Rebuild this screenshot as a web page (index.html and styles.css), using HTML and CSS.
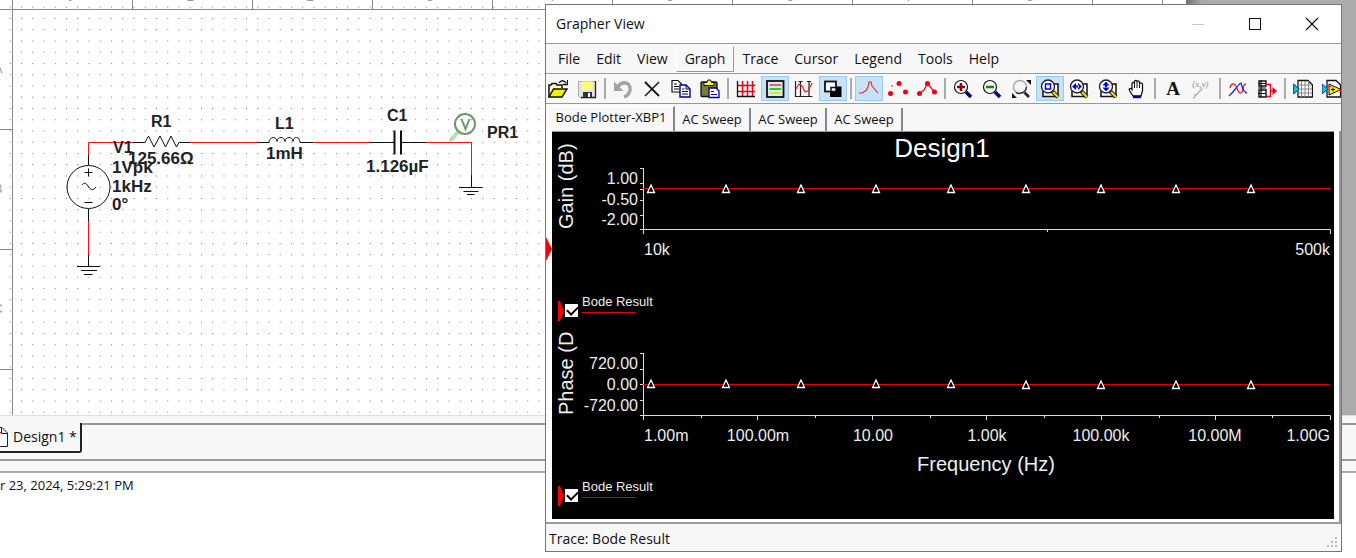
FILE: index.html
```
<!DOCTYPE html>
<html lang="en">
<head>
<meta charset="utf-8">
<title>Design1 - Grapher View</title>
<link rel="stylesheet" href="styles.css">
</head>
<body>
<main class="workspace">
  <div class="canvas">
    <svg class="schematic" role="img" aria-label="Series RLC schematic">
      <defs>
        <pattern id="dots" x="9.7" y="6.7" width="11.25" height="11.25" patternUnits="userSpaceOnUse">
          <rect width="1.1" height="1.1" fill="#888"/>
        </pattern>
      </defs>
      <rect class="sheet-dots" x="9" y="6" width="1150" height="100%" fill="url(#dots)"/>
      <g class="frame">
        <path d="M12.5 0V2000M0 9.5H1163M0 129.5H12M0 249.5H12M0 369.5H12M132.5 0V9M252.5 0V9M372.5 0V9M492.5 0V9M612.5 0V9M732.5 0V9M852.5 0V9M972.5 0V9M1092.5 0V9M1162.5 0V2000"/>
      </g>
      <g class="ruler">
        <text x="70" y="1">0</text><text x="190" y="1">1</text><text x="310" y="1">2</text>
        <text x="430" y="1">3</text><text x="551" y="1">4</text><text x="670" y="1">5</text>
        <text x="790" y="1">6</text><text x="909" y="1">7</text><text x="1030" y="1">8</text>
        <text x="-2" y="73">A</text><text x="-2" y="193">B</text><text x="-2" y="313">C</text>
      </g>
      <path class="wire" d="M88.5 155V142.5H133M190 142.5H257M313 142.5H369M426 142.5H471.500V175M88.500 221V255"/>
      <g class="part">
        <path d="M133 142.500H145L148.500 136L154 147L160 136L165.500 147L171 136L176.500 147L179 142.500H190"/>
        <path d="M257 142.500H269C269 140 271 137.500 273.500 137.500S277 140 277 141.500C277 139 279 137.500 281 137.500S285 139 285 141.500C285 139 287 137.500 289 137.500S293 139 293 141.500C293 139 294.500 137.500 296.500 137.500S300 140 300 142.500H313"/>
        <path d="M369 142.500H394M401 142.500H426"/>
        <path class="thick" d="M394.500 130.500V154.500M401 130.500V154.500"/>
        <path d="M471.500 175V187M459 187.500H482.500M463.500 191.500H478.500M467 194.500H474.500"/>
        <circle cx="88.500" cy="187" r="21.500"/>
        <path d="M88.500 155V165M84.500 172.500H92.500M88.500 168.500V176.500M84.500 202.500H92.500M82 185C84 182.500 86 182.500 88 186S93 191.500 96 187"/>
        <path d="M88.500 209V221M88.500 255V266M77 266.500H100M81 270.500H97M84 274.500H92.500"/>
      </g>
      <path class="probe-tip" d="M450 141L458 132"/>
      <g class="probe">
        <circle cx="465" cy="124" r="10"/>
        <path d="M461.500 119L465.500 129L469.500 119"/>
      </g>
      <g class="ref">
        <text x="151" y="127">R1</text><text x="275" y="129">L1</text>
        <text x="387" y="121">C1</text><text x="487" y="138">PR1</text><text x="113" y="153">V1</text>
      </g>
      <g class="value">
        <text x="128" y="164">125.66Ω</text><text x="266" y="159">1mH</text>
        <text x="366" y="172">1.126µF</text><text x="112" y="173">1Vpk</text>
        <text x="112" y="192">1kHz</text><text x="112" y="210">0°</text>
      </g>
    </svg>
    <div class="desk"></div>
  </div>
  <nav class="sheets" aria-label="Design sheets">
    <button class="sheet-tab" type="button">
      <svg class="doc" viewBox="0 0 8 20"><path d="M0 .5H2L7.500 6V19.500H0" fill="#fff" stroke="#222"/><path d="M1.500 .5V6.500H7.500" fill="none" stroke="#222"/><path d="M0 5.500H1.500" stroke="#e00"/></svg>
      Design1 *
    </button>
  </nav>
  <section class="output"><span class="stamp">r 23, 2024, 5:29:21 PM</span></section>
</main>

<section class="window" aria-label="Grapher View">
  <header class="title-bar">
    <h1 class="title">Grapher View</h1>
    <button class="ctl" type="button" aria-label="Minimize"><svg class="glyph" viewBox="0 0 14 14"><path d="M1 7.500H13" stroke="#c8c8c8"/></svg></button>
    <button class="ctl" type="button" aria-label="Maximize"><svg class="glyph" viewBox="0 0 14 14"><rect x="1.500" y="1.500" width="11" height="11" fill="none" stroke="#111"/></svg></button>
    <button class="ctl" type="button" aria-label="Close"><svg class="glyph" viewBox="0 0 14 14"><path d="M1 1L13 13M13 1L1 13" stroke="#111" stroke-width="1.200"/></svg></button>
  </header>
  <nav class="menu">
    <button type="button">File</button><button type="button">Edit</button><button type="button">View</button><button type="button" class="raised">Graph</button><button type="button">Trace</button><button type="button">Cursor</button><button type="button">Legend</button><button type="button">Tools</button><button type="button">Help</button>
  </nav>
  <div class="toolbar" role="toolbar" aria-label="Grapher tools">
    <button type="button" aria-label="Open"><svg viewBox="0 0 20 20"><path d="M1 18V6H3L4 4.500H8L9 6H14V9" fill="#ffffb0" stroke="#111" stroke-width="1.500"/><path d="M1 18L5.500 10H19L14 18Z" fill="#f4f000" stroke="#111" stroke-width="1.500"/><path d="M11 4C13 1 16 1 18 4M19.500 1V5.500H15" fill="none" stroke="#111" stroke-width="1.300"/></svg></button>
    <button type="button" aria-label="Save"><svg viewBox="0 0 20 20"><path d="M1.500 2.500H18.500V18.500H3L1.500 17Z" fill="#e4e4e4" stroke="#aaa"/><path d="M18.500 2V18.500H4" fill="none" stroke="#222" stroke-width="1.300"/><rect x="5" y="2.500" width="10.500" height="8.500" fill="#ffff70"/><path d="M6 13H15V18H6Z" fill="#333"/><rect x="11" y="14" width="2" height="4" fill="#fff"/></svg></button>
    <i class="sep"></i>
    <button type="button" aria-label="Undo"><svg viewBox="0 0 20 20"><path d="M4 9C9 1 18 3 17 11C16.500 14 14 17 11 18" fill="none" stroke="#a4a4a4" stroke-width="3.500"/><path d="M1 2.500V12H10.500Z" fill="#a4a4a4"/></svg></button>
    <button type="button" aria-label="Delete"><svg viewBox="0 0 20 20"><path d="M3 3L17 17" stroke="#111" stroke-width="1.800"/><path d="M17 3L3 17" stroke="#111" stroke-width="1.500"/></svg></button>
    <button type="button" aria-label="Copy"><svg viewBox="0 0 20 20"><path d="M1 1.500H7L10.500 5V13H1Z" fill="#fff" stroke="#111" stroke-width="1.200"/><path d="M3 5H6M3 7.500H8M3 10H8" stroke="#111"/><path d="M9 6H15L19 10V18H9Z" fill="#fff" stroke="#00008b" stroke-width="1.400"/><path d="M15 6V10H19M11 10H13.500M11 12.500H17M11 15H17" fill="none" stroke="#00008b"/></svg></button>
    <button type="button" aria-label="Paste"><svg viewBox="0 0 20 20"><rect x="1" y="3" width="16" height="14.500" rx="1" fill="#7a7a45" stroke="#111" stroke-width="1.300"/><path d="M4 6.500V3.500H7L8 1H10.500L11.500 3.500H14V6.500Z" fill="#ffff40" stroke="#111"/><path d="M9 9H16L19 12V18.500H9Z" fill="#fff" stroke="#00008b" stroke-width="1.300"/><path d="M11 12.500H14M11 15.500H17" stroke="#00008b"/></svg></button>
    <i class="sep"></i>
    <button type="button" aria-label="Grid"><svg viewBox="0 0 20 20"><path d="M6.500 2V17M11.500 2V17M16.500 2V17M2 6.500H19M2 12.500H19" stroke="#f00010" stroke-width="1.500"/><path d="M1.500 2V17.500H19" fill="none" stroke="#111" stroke-width="1.300"/></svg></button>
    <button type="button" class="on" aria-label="Legend"><svg viewBox="0 0 20 20"><rect x="2" y="2" width="16.500" height="16" fill="#d6ecff" stroke="#111" stroke-width="1.800"/><path d="M4.500 6H16" stroke="#f03030" stroke-width="1.500"/><path d="M4.500 10H16" stroke="#00d800" stroke-width="1.800"/><path d="M4.500 14H16" stroke="#e6e600" stroke-width="1.800"/></svg></button>
    <button type="button" aria-label="Cursors"><svg viewBox="0 0 20 20"><path d="M1.500 2V17.500H18.500M6.500 3V17M15 3V17M4.500 2.500H8.500M13 2.500H17" fill="none" stroke="#222" stroke-width="1.200"/><path d="M2 10L5 5L8 7L11 13L14 12L18 4" fill="none" stroke="#f02020" stroke-width="1.200"/></svg></button>
    <button type="button" class="on" aria-label="Black and white"><svg viewBox="0 0 20 20"><rect x="7" y="7.500" width="11.500" height="10.500" fill="#000"/><rect x="2" y="2.500" width="11" height="10" fill="#fff" stroke="#111" stroke-width="1.800"/><rect x="8" y="8.500" width="5" height="4" fill="#fff" stroke="#111" stroke-width="1.500"/></svg></button>
    <i class="sep"></i>
    <button type="button" class="on" aria-label="Line"><svg viewBox="0 0 20 20"><path d="M0 14H3L7 11.500L9 8L10 3H12L13 7L19 14" fill="none" stroke="#f02020" stroke-width="1.100"/></svg></button>
    <button type="button" aria-label="Points"><svg viewBox="0 0 20 20"><g fill="#f00010"><circle cx="2.500" cy="14.500" r="2.500"/><circle cx="11" cy="4.500" r="2.500"/><circle cx="17.500" cy="13" r="2.500"/><circle cx="4" cy="7" r=".8"/></g></svg></button>
    <button type="button" aria-label="Line and points"><svg viewBox="0 0 20 20"><path d="M2.500 14.500L7 11L10.500 4.500L17.500 13" fill="none" stroke="#f00010" stroke-width="1.200"/><g fill="#f00010"><circle cx="2.500" cy="14.500" r="2.500"/><circle cx="10.500" cy="4.500" r="2.500"/><circle cx="17.500" cy="13" r="2.500"/></g></svg></button>
    <i class="sep"></i>
    <button type="button" aria-label="Zoom in"><svg viewBox="0 0 20 20"><path d="M13 13L18 18" stroke="#00008b" stroke-width="3.500"/><circle cx="8" cy="8" r="6.500" fill="#fff" stroke="#111" stroke-width="1.200"/><path d="M8 4V12M4 8H12" stroke="#900010" stroke-width="2.600"/></svg></button>
    <button type="button" aria-label="Zoom out"><svg viewBox="0 0 20 20"><path d="M13 13L18 18" stroke="#00008b" stroke-width="3.500"/><circle cx="8" cy="8" r="6.500" fill="#fff" stroke="#111" stroke-width="1.200"/><path d="M4 8H12" stroke="#008a10" stroke-width="2.600"/></svg></button>
    <button type="button" aria-label="Zoom to fit"><svg viewBox="0 0 20 20"><path d="M13 13L18 18" stroke="#222" stroke-width="2.600"/><circle cx="9" cy="8" r="6.500" fill="#f4f4f4" stroke="#aaa" stroke-width="1.500"/><path d="M5 13.500C9 16 15 13 15.500 8" fill="none" stroke="#222" stroke-width="1.200"/><path d="M15 1H20V6ZM1 14V19H6Z" fill="#111"/></svg></button>
    <button type="button" class="on" aria-label="Zoom region"><svg viewBox="0 0 20 20"><path d="M3 12V17.500H18V5H14" fill="#fff" stroke="#111" stroke-width="1.500"/><path d="M12 12L18 18" stroke="#222" stroke-width="4"/><path d="M13 13L18 18" stroke="#f0e020" stroke-width="2"/><circle cx="8" cy="7.500" r="6.500" fill="#fff" stroke="#222" stroke-width="1.400"/><rect x="5.500" y="5" width="5" height="5" fill="#fff" stroke="#0000f0" stroke-width="1.500"/></svg></button>
    <button type="button" aria-label="Zoom horizontal"><svg viewBox="0 0 20 20"><path d="M3 12V17.500H18V5H14" fill="#fff" stroke="#111" stroke-width="1.500"/><path d="M12 12L18 18" stroke="#222" stroke-width="4"/><path d="M13 13L18 18" stroke="#f0e020" stroke-width="2"/><circle cx="8" cy="7.500" r="6.500" fill="#fff" stroke="#222" stroke-width="1.400"/><path d="M3 7.500L7 4V11ZM13 7.500L9 4V11ZM6 6.500H10V8.500H6Z" fill="#0000f0"/></svg></button>
    <button type="button" aria-label="Zoom vertical"><svg viewBox="0 0 20 20"><path d="M3 12V17.500H18V5H14" fill="#fff" stroke="#111" stroke-width="1.500"/><path d="M12 12L18 18" stroke="#222" stroke-width="4"/><path d="M13 13L18 18" stroke="#f0e020" stroke-width="2"/><circle cx="8" cy="7.500" r="6.500" fill="#fff" stroke="#222" stroke-width="1.400"/><path d="M8 2.500L11.500 6.500H4.500ZM8 12.500L11.500 8.500H4.500ZM7 6H9V9H7Z" fill="#0000f0"/></svg></button>
    <button type="button" aria-label="Pan"><svg viewBox="0 0 20 20"><path d="M6 17L2.500 11.500C1.500 9.500 3.500 8.500 5 10.500V4.500C5 3 7.500 3 7.500 4.500V2.500C7.500 1 10 1 10 2.500V3C10 1.500 12.500 1.500 12.500 3.500V5C12.500 3.500 15.500 3.500 15.500 5.500V12L14 17Z" fill="#fff" stroke="#111" stroke-width="1.300"/><path d="M7.500 4V9M10 3V9M12.500 5V9" stroke="#111"/><path d="M6 18H14" stroke="#0000a0" stroke-width="2.400"/></svg></button>
    <i class="sep"></i>
    <button type="button" class="letter" aria-label="Add text">A</button>
    <button type="button" class="coords" aria-label="Show coordinates"><svg viewBox="0 0 20 20"><text x="0" y="8" class="xy">(x,y)</text><path d="M3 17L10 10M1 18.500A1.500 1.500 0 1 0 2 15.500" fill="none" stroke="#aaa" stroke-width="1.300"/></svg></button>
    <i class="sep"></i>
    <button type="button" aria-label="Overlay traces"><svg viewBox="0 0 20 20"><path d="M2 9C3 4 6 4 8 7S10 15 13 14S14 5 18 5" fill="none" stroke="#f02020" stroke-width="1.300"/><path d="M1 17C7 12 10 5 13 4C14 8 16 14 19 14" fill="none" stroke="#2020f0" stroke-width="1.300"/></svg></button>
    <button type="button" aria-label="Latest result"><svg viewBox="0 0 20 20"><path d="M2 2H9V7H2ZM2 11H9V18H2Z" fill="#fff" stroke="#111" stroke-width="1.400"/><path d="M1 4.500H9M1 9H9M1 14.500H9M4 1V18" stroke="#111" stroke-width="1.200"/><path d="M9 5.500H13.500V17.500H9M13.500 12H17" fill="none" stroke="#f00010" stroke-width="1.300"/><path d="M15.500 8L20 12L15.500 16Z" fill="#f00010"/></svg></button>
    <i class="sep"></i>
    <button type="button" aria-label="Export to sheet"><svg viewBox="0 0 20 20"><path d="M5 1.500H15L19.500 6V18H5Z" fill="#fff" stroke="#111" stroke-width="1.300"/><path d="M8.500 2V18M12 2V18M15.500 2V18M5 6H19M5 10H19M5 14H19" stroke="#888"/><path d="M0.700 5V15L6 10Z" fill="#00d0f0" stroke="#103080"/></svg></button>
    <button type="button" aria-label="Export to LabVIEW"><svg viewBox="0 0 20 20"><path d="M5 1.500H14L18.500 6V18H5Z" fill="#fff" stroke="#111" stroke-width="1.300"/><path d="M7 5V16L19 10.500Z" fill="#ffee10" stroke="#111"/><path d="M0 5V15L6 10Z" fill="#00d0f0" stroke="#103080"/><path d="M5 7.500H9M15 11.500H20" stroke="#f02020"/><path d="M9 10.500H13M11 8.500V12.500" stroke="#111"/></svg></button>
  </div>
  <div class="tabs">
    <button type="button" class="tab active">Bode Plotter-XBP1</button><button type="button" class="tab">AC Sweep</button><button type="button" class="tab">AC Sweep</button><button type="button" class="tab">AC Sweep</button>
  </div>
  <div class="body">
    <i class="marker"></i>
    <div class="plots">
      <svg class="plot" viewBox="552 132 782 160" role="img" aria-label="Gain plot">
        <defs><path id="tri" d="M0 -7L3.500 .500H-3.500Z" fill="#000" stroke="#fff" stroke-width="1.300"/></defs>
        <text class="heading" x="942" y="157">Design1</text>
        <text class="axis" transform="translate(573 229) rotate(-90)">Gain (dB)</text>
        <g class="num end"><text x="638" y="184">1.00</text><text x="638" y="205">-0.50</text><text x="638" y="225">-2.00</text><text x="1330" y="255">500k</text></g>
        <text class="num" x="644" y="255">10k</text>
        <path class="lines" d="M643.500 168V234M640 168.500H644M640 183.500H644M640 189.500H644M640 200.500H644M640 215.500H644M640 229.500H1330.500V234M1047.500 230V232"/>
        <path class="trace" d="M643 188.500H1330"/>
        <use href="#tri" x="651" y="192"/><use href="#tri" x="726" y="192"/><use href="#tri" x="801" y="192"/><use href="#tri" x="876" y="192"/><use href="#tri" x="951" y="192"/><use href="#tri" x="1026" y="192"/><use href="#tri" x="1101" y="192"/><use href="#tri" x="1176" y="192"/><use href="#tri" x="1251" y="192"/>
      </svg>
      <div class="legend"><i class="arrow"></i><input type="checkbox" id="gain" checked><label for="gain">Bode Result</label></div>
      <svg class="plot" viewBox="552 332 782 145" role="img" aria-label="Phase plot">
        <text class="axis" transform="translate(573 415) rotate(-90)">Phase (D</text>
        <g class="num end"><text x="638" y="369">720.00</text><text x="638" y="390">0.00</text><text x="638" y="411">-720.00</text><text x="1330" y="441">1.00G</text></g>
        <text class="num" x="644" y="441">1.00m</text>
        <g class="num mid"><text x="758" y="441">100.00m</text><text x="873" y="441">10.00</text><text x="987" y="441">1.00k</text><text x="1101" y="441">100.00k</text><text x="1215" y="441">10.00M</text></g>
        <text class="axis mid" x="986" y="471">Frequency (Hz)</text>
        <path class="lines" d="M643.500 353V420M640 353.500H644M640 369.500H644M640 384.500H644M640 400.500H644M640 415.500H1330.500V420M757.500 416V420M872.500 416V420M986.500 416V420M1101.500 416V420M1215.500 416V420M701.500 416V418M815.500 416V418M930.500 416V418M1044.500 416V418M1159.500 416V418M1272.500 416V418"/>
        <path class="trace" d="M643 384.500H1330"/>
        <use href="#tri" x="651" y="387"/><use href="#tri" x="726" y="387"/><use href="#tri" x="801" y="387"/><use href="#tri" x="876" y="387"/><use href="#tri" x="951" y="387"/><use href="#tri" x="1026" y="388"/><use href="#tri" x="1101" y="388"/><use href="#tri" x="1176" y="388"/><use href="#tri" x="1251" y="388"/>
      </svg>
      <div class="legend"><i class="arrow"></i><input type="checkbox" id="phase" checked><label for="phase">Bode Result</label></div>
    </div>
  </div>
  <footer class="status"><span>Trace: Bode Result</span>
    <svg class="grip" viewBox="0 0 12 12"><path d="M8 0H10V2H8ZM4 4H6V6H4ZM8 4H10V6H8ZM0 8H2V10H0ZM4 8H6V10H4ZM8 8H10V10H8Z" fill="#bbb"/></svg>
  </footer>
</section>
</body>
</html>
```

FILE: styles.css
```
* { box-sizing: border-box; }

body {
  margin: 0;
  height: 100vh;
  overflow: hidden;
  position: relative;
  background: #fff;
  color: #111;
  font: 14px/20px "Open Sans", "Noto Sans", sans-serif;
}

button {
  margin: 0;
  padding: 0;
  border: 0;
  background: none;
  color: inherit;
  font: inherit;
  white-space: nowrap;
}

svg { display: block; }

/* Schematic workspace */
.workspace {
  display: flex;
  flex-direction: column;
  height: 100%;
}

.canvas {
  flex: 1;
  display: flex;
  min-height: 0;
}

.schematic {
  flex: 0 1 1186px;
  min-width: 0;
  height: 100%;
  background: #fff;
}

.desk {
  flex: 1;
  background: linear-gradient(to right, #707070, #ababab 16px);
}

.frame { fill: none; stroke: #888; }
.ruler { fill: #999; font: 13px "Liberation Sans", Arial, sans-serif; text-anchor: middle; }
.wire { fill: none; stroke: #ff1010; }
.part { fill: none; stroke: #111; }
.thick { stroke-width: 2; }
.probe-tip { stroke: #b2dfb2; stroke-width: 4; }
.probe { fill: none; stroke: #6b976b; stroke-width: 2; }
.ref { fill: #222; font: bold 16px "Liberation Sans", Arial, sans-serif; }
.value { fill: #222; font: bold 17px "Liberation Sans", Arial, sans-serif; }

.sheets {
  display: flex;
  height: 44px;
  padding-bottom: 7px;
  border-top: 1px solid #ddd;
  background: #f7f7f7;
}

.sheets::after {
  content: "";
  flex: 1;
  margin-top: 7px;
  border-top: 2px solid #999;
}

.sheet-tab {
  display: flex;
  align-items: center;
  gap: 5px;
  height: 30px;
  margin-top: 7px;
  padding-right: 3px;
  border-right: 2px solid #222;
  border-bottom: 2px solid #222;
  border-bottom-right-radius: 3px;
}

.doc { width: 8px; height: 20px; }

.output {
  height: 99px;
  border-top: 2px solid #999;
  background: #fff;
}

.output::before {
  content: "";
  display: block;
  height: 10px;
  border-bottom: 2px solid #aaa;
  background: #f7f7f7;
}

.stamp { display: block; padding-top: 2px; font-size: 13px; }

/* Grapher window, floating over the workspace */
.window {
  position: absolute;
  inset: 4px 14px 6px 545px;
  display: flex;
  flex-direction: column;
  overflow: hidden;
  border: 1px solid #777;
  background: #f7f7f7;
}

.title-bar {
  display: flex;
  align-items: center;
  height: 39px;
  padding: 0 1px 0 10px;
  border-bottom: 1px solid #999;
  background: #fff;
}

.title { flex: 1; margin: 0; font-size: 14px; font-weight: 400; }

.ctl {
  display: grid;
  place-items: center;
  width: 57px;
  height: 38px;
}

.glyph { width: 14px; height: 14px; }

.menu {
  display: flex;
  align-items: center;
  height: 30px;
  padding-left: 4px;
  border-bottom: 1px solid #999;
}

.menu button { height: 26px; padding: 0 8px; }

.menu .raised {
  border: 1px solid #fff;
  border-right-color: #999;
  border-bottom-color: #999;
}

.toolbar {
  display: flex;
  align-items: center;
  gap: 1px;
  height: 30px;
  margin-left: -2px;
  border-bottom: 1px solid #999;
}

.toolbar button {
  display: grid;
  place-items: center;
  flex: none;
  width: 28px;
  height: 25px;
  border: 1px solid transparent;
}

.toolbar svg { width: 20px; height: 20px; }
.toolbar .on { border-color: #99cbee; background: #c7e2f6; }

.sep {
  flex: none;
  width: 2px;
  height: 21px;
  margin: 0 2px;
  background: #aaa;
}

.toolbar .letter { font: bold 19px/20px "Liberation Serif", serif; }
.xy { fill: #aaa; font: italic bold 9px "Liberation Serif", serif; }
.coords svg { overflow: visible; }

.tabs {
  display: flex;
  align-items: flex-end;
  height: 27px;
  padding-left: 2px;
}

.tab {
  height: 23px;
  width: 76px;
  padding-bottom: 2px;
  border-right: 2px solid #888;
  font-size: 13px;
}

.tab.active {
  width: 127px;
  height: 25px;
  padding-bottom: 5px;
  border-top: 1px solid #fff;
  border-left: 1px solid #fff;
}

.body {
  position: relative;
  flex: 1;
  min-height: 0;
  padding: 0 5px 3px 6px;
  border-right: 2px solid #999;
  border-bottom: 2px solid #999;
  background: #fff;
}

.marker {
  position: absolute;
  left: 0;
  top: 106px;
  width: 6px;
  height: 24px;
  background: #f00;
  clip-path: polygon(0 0, 100% 50%, 0 100%);
}

.plots {
  display: flex;
  flex-direction: column;
  height: 100%;
  border-top: 1px solid #999;
  background: #000;
  color: #eee;
}

.plot { width: 100%; overflow: visible; }
.plot text { fill: #eee; font-family: "Liberation Sans", Arial, sans-serif; }
.plot .heading { fill: #fff; font-size: 26px; text-anchor: middle; }
.axis { font-size: 20px; }
.num { font-size: 16px; }
.end { text-anchor: end; }
.mid { text-anchor: middle; }
.lines { fill: none; stroke: #ddd; }
.trace { stroke: #e80000; }

.legend {
  display: flex;
  align-items: flex-start;
  height: 40px;
  padding-left: 6px;
}

.arrow {
  width: 6px;
  height: 20px;
  margin-top: 9px;
  background: #f00;
  clip-path: polygon(0 0, 30% 0, 100% 50%, 30% 100%, 0 100%);
}

.legend input {
  appearance: none;
  width: 13px;
  height: 13px;
  margin: 12px 4px 0 1px;
  background: #fff;
}

.legend input:checked::before {
  content: "";
  display: block;
  width: 9px;
  height: 5px;
  margin: 2px;
  border-left: 2px solid #000;
  border-bottom: 2px solid #000;
  transform: rotate(-45deg);
}

.legend label { font: 13px/20px "Liberation Sans", Arial, sans-serif; }

.legend label::after {
  content: "";
  display: block;
  width: 54px;
  height: 1px;
  background: #e80000;
}

.status {
  display: flex;
  align-items: flex-end;
  justify-content: space-between;
  height: 27px;
  padding: 0 2px 2px 3px;
}

.grip { width: 12px; height: 12px; }
```
